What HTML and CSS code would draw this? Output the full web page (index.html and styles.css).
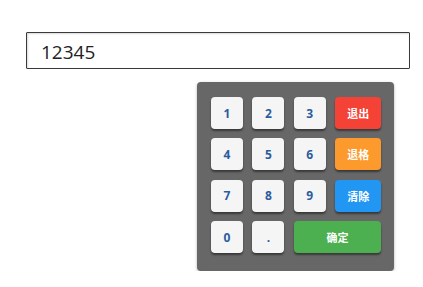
FILE: index.html
```html
<!DOCTYPE html>
<html lang="zh-CN">
<head>
    <meta charset="UTF-8" />
    <meta name="viewport" content="width=device-width, initial-scale=1.0" />
    <title>数字键盘</title>
    <link rel="stylesheet" href="styles.css">
</head>
<body>
    <div class="container">
        <!-- 输入框 -->
        <input type="text" class="num-input" id="num-input" value="12345" readonly>

        <!-- 键盘 -->
        <div class="keypad">
            <button class="key">1</button>
            <button class="key">2</button>
            <button class="key">3</button>
            <button class="key fn exit">退出</button>
            <button class="key">4</button>
            <button class="key">5</button>
            <button class="key">6</button>
            <button class="key fn backspace">退格</button>
            <button class="key">7</button>
            <button class="key">8</button>
            <button class="key">9</button>
            <button class="key fn clear">清除</button>
            <button class="key">0</button>
            <button class="key">.</button>
            <button class="key fn ok">确定</button>
        </div>
    </div>
</body>
</html>
```

FILE: styles.css
```css
body {
    margin: 0;
    padding: 0;
    background: #fff;
    font-family: "Open Sans", "Noto Sans CJK SC", sans-serif;
}
.container {
    padding: 32px 13px 0 26px;
}
.num-input {
    display: block;
    box-sizing: border-box;
    width: 384px;
    height: 37px;
    margin: 0;
    padding: 3px 14px 0 14px;
    border: 1px solid #3a3a3a;
    border-radius: 1px;
    box-shadow: inset 1px 1px 2px rgba(0, 0, 0, 0.15);
    font-family: "Open Sans", sans-serif;
    font-size: 19px;
    color: #222;
    outline: none;
}
.keypad {
    display: grid;
    grid-template-columns: 32px 32px 32px 46px;
    grid-auto-rows: 32px;
    gap: 9.4px;
    width: 170px;
    margin: 13px 0 0 171px;
    padding: 15px 13px 18px 14px;
    background: #676767;
    border-radius: 4px;
    box-shadow: 0 1px 3px rgba(0, 0, 0, 0.3);
}
.key {
    padding: 0;
    border: none;
    border-radius: 4px;
    background: #f5f5f5;
    color: #2c5c9e;
    font-family: "Open Sans", sans-serif;
    font-weight: bold;
    font-size: 12px;
    box-shadow: 0 2px 2px rgba(0, 0, 0, 0.45);
    cursor: pointer;
}
.fn {
    color: #fff;
    font-family: "Noto Sans CJK SC", sans-serif;
    font-size: 11px;
}
.exit {
    background: #f44336;
}
.backspace {
    background: #fd9a2e;
}
.clear {
    background: #2196f3;
}
.ok {
    grid-column: span 2;
    background: #4caf50;
}
```
